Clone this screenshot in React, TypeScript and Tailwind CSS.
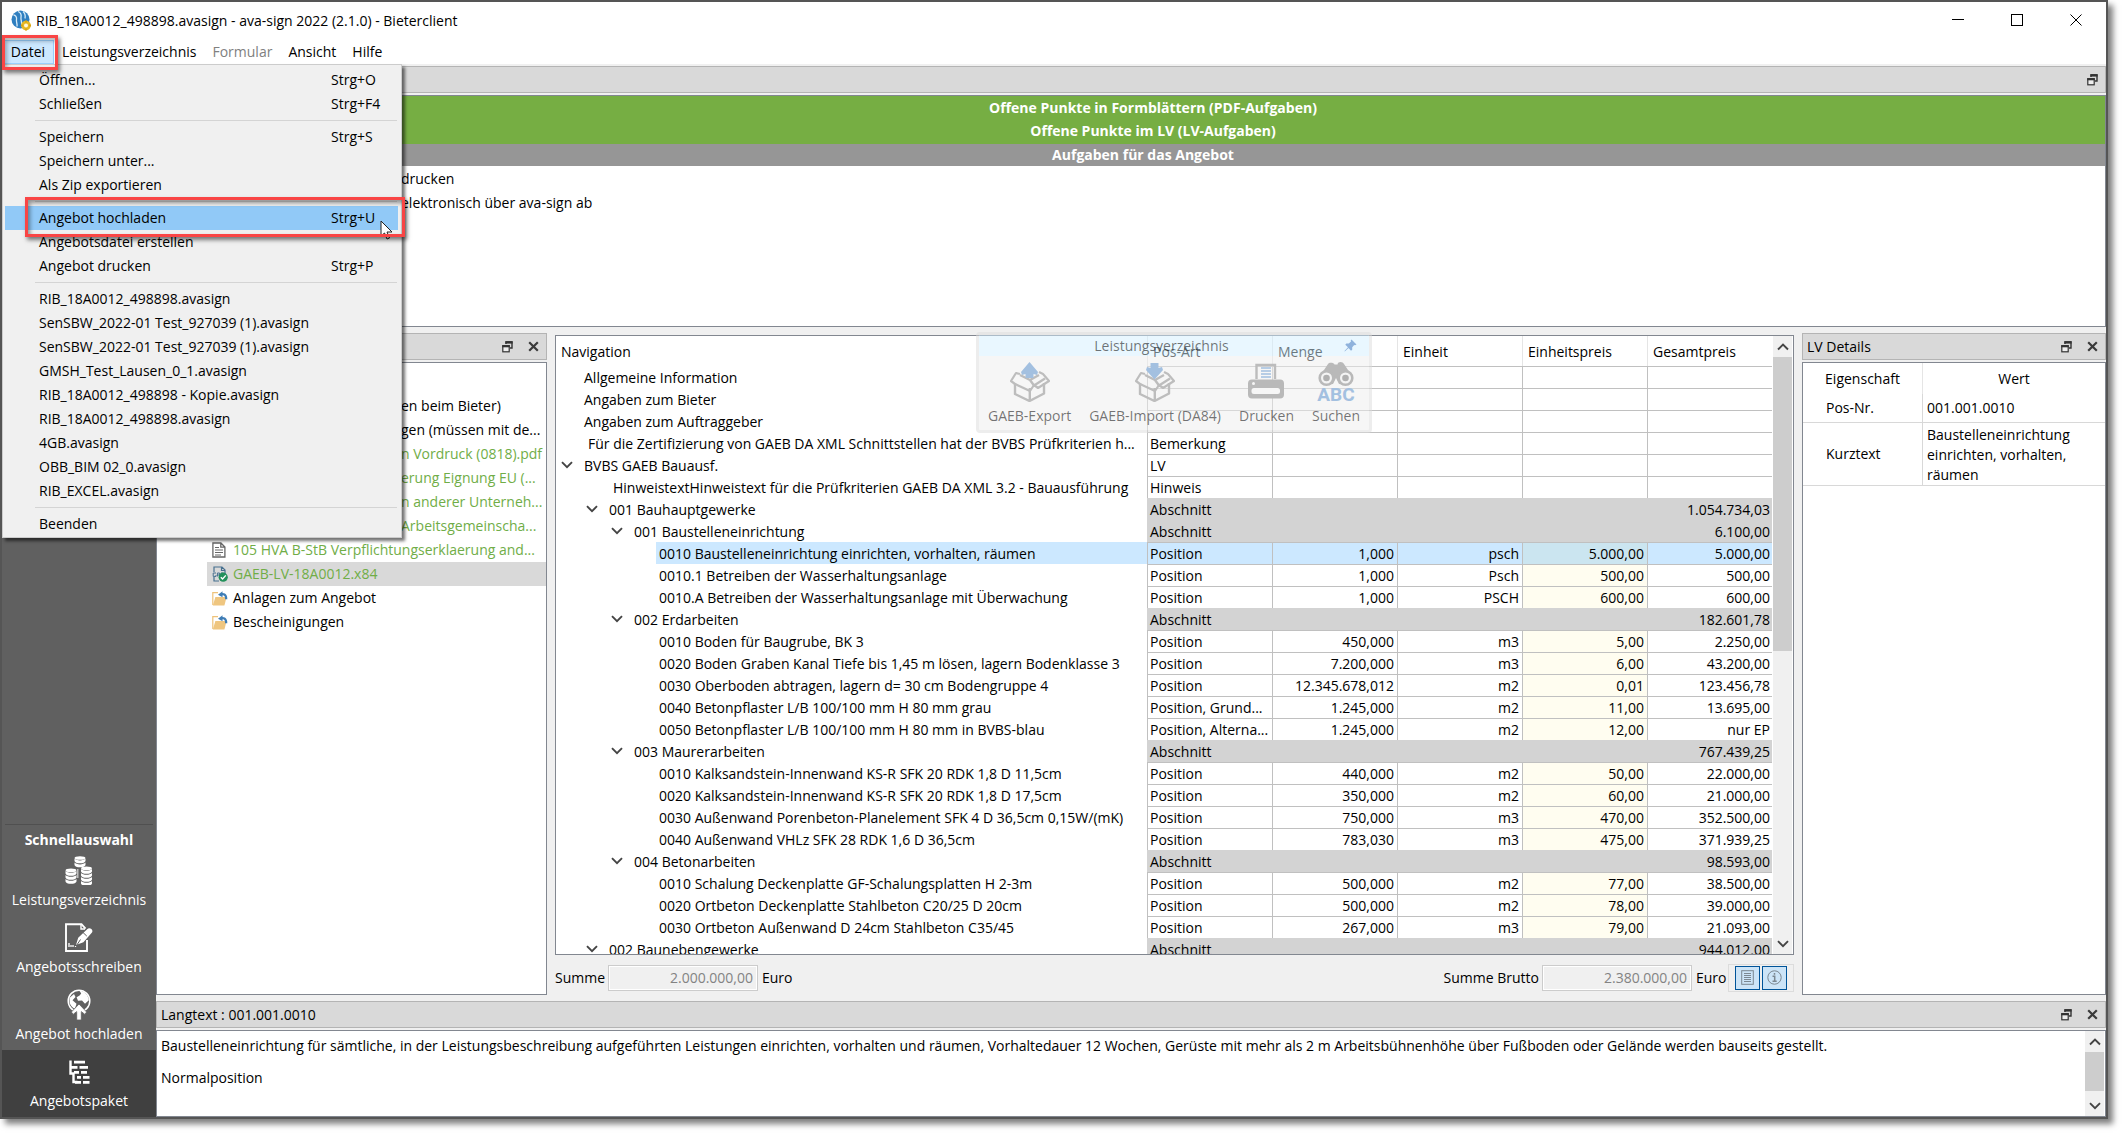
import { useState, type ReactNode } from "react";

interface MenuEntry {
  label: string;
  keys?: string;
}

interface GridRow {
  level: number;
  text: string;
  kind?: string;
  open?: boolean;
  menge?: string;
  einheit?: string;
  ep?: string;
  gp?: string;
}

const FILE_MENU: MenuEntry[][] = [
  [
    { label: "Öffnen...", keys: "Strg+O" },
    { label: "Schließen", keys: "Strg+F4" },
  ],
  [
    { label: "Speichern", keys: "Strg+S" },
    { label: "Speichern unter..." },
    { label: "Als Zip exportieren" },
  ],
  [
    { label: "Angebot hochladen", keys: "Strg+U" },
    { label: "Angebotsdatei erstellen" },
    { label: "Angebot drucken", keys: "Strg+P" },
  ],
  [
    { label: "RIB_18A0012_498898.avasign" },
    { label: "SenSBW_2022-01 Test_927039 (1).avasign" },
    { label: "SenSBW_2022-01 Test_927039 (1).avasign" },
    { label: "GMSH_Test_Lausen_0_1.avasign" },
    { label: "RIB_18A0012_498898 - Kopie.avasign" },
    { label: "RIB_18A0012_498898.avasign" },
    { label: "4GB.avasign" },
    { label: "OBB_BIM 02_0.avasign" },
    { label: "RIB_EXCEL.avasign" },
  ],
  [{ label: "Beenden" }],
];

const ROWS: GridRow[] = [
  { level: 0, text: "Allgemeine Information" },
  { level: 0, text: "Angaben zum Bieter" },
  { level: 0, text: "Angaben zum Auftraggeber" },
  { level: 0, text: "Für die Zertifizierung von GAEB DA XML Schnittstellen hat der BVBS Prüfkriterien h...", kind: "Bemerkung" },
  { level: 0, text: "BVBS GAEB Bauausf.", kind: "LV", open: true },
  { level: 1, text: "HinweistextHinweistext für die Prüfkriterien GAEB DA XML 3.2 - Bauausführung", kind: "Hinweis" },
  { level: 1, text: "001 Bauhauptgewerke", kind: "Abschnitt", open: true, gp: "1.054.734,03" },
  { level: 2, text: "001 Baustelleneinrichtung", kind: "Abschnitt", open: true, gp: "6.100,00" },
  { level: 3, text: "0010 Baustelleneinrichtung einrichten, vorhalten, räumen", kind: "Position", menge: "1,000", einheit: "psch", ep: "5.000,00", gp: "5.000,00" },
  { level: 3, text: "0010.1 Betreiben der Wasserhaltungsanlage", kind: "Position", menge: "1,000", einheit: "Psch", ep: "500,00", gp: "500,00" },
  { level: 3, text: "0010.A Betreiben der Wasserhaltungsanlage mit Überwachung", kind: "Position", menge: "1,000", einheit: "PSCH", ep: "600,00", gp: "600,00" },
  { level: 2, text: "002 Erdarbeiten", kind: "Abschnitt", open: true, gp: "182.601,78" },
  { level: 3, text: "0010 Boden für Baugrube, BK 3", kind: "Position", menge: "450,000", einheit: "m3", ep: "5,00", gp: "2.250,00" },
  { level: 3, text: "0020 Boden Graben Kanal Tiefe bis 1,45 m lösen, lagern Bodenklasse 3", kind: "Position", menge: "7.200,000", einheit: "m3", ep: "6,00", gp: "43.200,00" },
  { level: 3, text: "0030 Oberboden abtragen, lagern d= 30 cm Bodengruppe 4", kind: "Position", menge: "12.345.678,012", einheit: "m2", ep: "0,01", gp: "123.456,78" },
  { level: 3, text: "0040 Betonpflaster L/B 100/100 mm H 80 mm grau", kind: "Position, Grund...", menge: "1.245,000", einheit: "m2", ep: "11,00", gp: "13.695,00" },
  { level: 3, text: "0050 Betonpflaster L/B 100/100 mm H 80 mm in BVBS-blau", kind: "Position, Alterna...", menge: "1.245,000", einheit: "m2", ep: "12,00", gp: "nur EP" },
  { level: 2, text: "003 Maurerarbeiten", kind: "Abschnitt", open: true, gp: "767.439,25" },
  { level: 3, text: "0010 Kalksandstein-Innenwand KS-R SFK 20 RDK 1,8 D 11,5cm", kind: "Position", menge: "440,000", einheit: "m2", ep: "50,00", gp: "22.000,00" },
  { level: 3, text: "0020 Kalksandstein-Innenwand KS-R SFK 20 RDK 1,8 D 17,5cm", kind: "Position", menge: "350,000", einheit: "m2", ep: "60,00", gp: "21.000,00" },
  { level: 3, text: "0030 Außenwand Porenbeton-Planelement SFK 4 D 36,5cm 0,15W/(mK)", kind: "Position", menge: "750,000", einheit: "m3", ep: "470,00", gp: "352.500,00" },
  { level: 3, text: "0040 Außenwand VHLz SFK 28 RDK 1,6 D 36,5cm", kind: "Position", menge: "783,030", einheit: "m3", ep: "475,00", gp: "371.939,25" },
  { level: 2, text: "004 Betonarbeiten", kind: "Abschnitt", open: true, gp: "98.593,00" },
  { level: 3, text: "0010 Schalung Deckenplatte GF-Schalungsplatten H 2-3m", kind: "Position", menge: "500,000", einheit: "m2", ep: "77,00", gp: "38.500,00" },
  { level: 3, text: "0020 Ortbeton Deckenplatte Stahlbeton C20/25 D 20cm", kind: "Position", menge: "500,000", einheit: "m2", ep: "78,00", gp: "39.000,00" },
  { level: 3, text: "0030 Ortbeton Außenwand D 24cm Stahlbeton C35/45", kind: "Position", menge: "267,000", einheit: "m3", ep: "79,00", gp: "21.093,00" },
  { level: 1, text: "002 Baunebengewerke", kind: "Abschnitt", open: true, gp: "944.012,00" },
];

const INDENT = ["pl-[3px]", "pl-[28px]", "pl-[53px]", "pl-[78px]"];

const AppIcon = () => (
  <svg width="20" height="21" viewBox="0 0 20 21" aria-hidden="true">
    <circle cx="9.5" cy="9.5" r="9" fill="#2f7fc0" />
    <path d="M2.500 5c2 0 3.500 2 3 4.500s1 4 .5 7M7 1.500c3 1 3.500 3.500 3 6s1.500 5 .5 9M12 1.500c2.500 2 2.500 4.500 2 7" stroke="#d8ecf8" strokeWidth="1.3" fill="none" />
    <circle cx="15" cy="15.5" r="3.4" fill="#fff8dc" stroke="#e8b923" strokeWidth="2.8" />
    <path d="M15 10.5v2M15 18.5v2M10 15.5h2M18 15.5h2" stroke="#d9a514" strokeWidth="2" />
  </svg>
);

const FloatIcon = () => (
  <svg width="11" height="12" viewBox="0 0 11 12" fill="none" aria-hidden="true">
    <path d="M4 3V1h6v6H8" stroke="#333" strokeWidth="1.4" />
    <path d="M3.4 1.4h7.2" stroke="#333" strokeWidth="2.4" />
    <rect x="0.8" y="4.8" width="6.4" height="6" fill="#eee" stroke="#333" strokeWidth="1.2" />
    <path d="M0.2 5.2h7.6" stroke="#333" strokeWidth="2.2" />
  </svg>
);

const CloseIcon = () => (
  <svg width="11" height="11" viewBox="0 0 11 11" aria-hidden="true">
    <path d="M1.2 1.2l8.6 8.6M9.8 1.2L1.2 9.8" stroke="#3a3a3a" strokeWidth="2.2" />
  </svg>
);

const Chevron = ({ up }: { up?: boolean }) => (
  <svg width="12" height="8" viewBox="0 0 12 8" fill="none" aria-hidden="true">
    <path d={up ? "M1 6.5l5-5 5 5" : "M1 1.2l5 5 5-5"} stroke="#444" strokeWidth="1.9" />
  </svg>
);

const DocIcon = () => (
  <svg width="14" height="16" viewBox="0 0 14 16" fill="none" stroke="#666" aria-hidden="true">
    <path d="M.9 1h8l4 4v10H.9zM8.8 1v4.2H13" strokeWidth="1.3" />
    <path d="M3 5.5h4M3 8h8M3 10.5h8M3 13h6" />
  </svg>
);

const GaebIcon = () => (
  <svg width="16" height="16" viewBox="0 0 16 16" fill="none" aria-hidden="true">
    <path d="M2 6V1h8l3 3v4M2 11v4h5M9.5 1v3.5H13" stroke="#47708f" strokeWidth="1.2" />
    <path d="M4 7H1.2v3.4H4V9M5.4 10.5V7h2.2v3.5M5.4 9h2M9 10.5V7h2.5" stroke="#47708f" />
    <circle cx="11.2" cy="11.2" r="4.6" fill="#23915b" />
    <path d="M8.8 11.2l1.8 1.8 3.2-3.6" stroke="#fff" strokeWidth="1.4" />
  </svg>
);

const FolderIcon = () => (
  <svg width="16" height="15" viewBox="0 0 16 15" fill="none" aria-hidden="true">
    <path d="M6 1.6H.8V14" stroke="#eec27a" strokeWidth="1.2" />
    <path d="M3.4 6h11.2l-2.2 8.6H.8z" fill="#efc680" />
    <path d="M8.2 4.2c3-2.4 6.2-.8 6 4" stroke="#3f7db5" strokeWidth="2.2" />
    <path d="M6 3.8L10.5.2v6z" fill="#3f7db5" />
  </svg>
);

// one stack of coins, each rim a filled arc below the top ellipse
const CoinStack = ({ x, y, n }: { x: number; y: number; n: number }) => (
  <g>
    {Array.from({ length: n }, (_, i) => (
      <path key={i} d={`M${x} ${y + 2 + i * 4}v2.2c0 3.4 11 3.4 11 0v-2.2c-2 2.4-9 2.4-11 0z`} />
    ))}
    <ellipse cx={x + 5.5} cy={y + 1.4} rx="5.4" ry="1.8" />
  </g>
);

const CoinsIcon = () => (
  <svg width="28" height="29" viewBox="0 0 28 29" fill="#fff" aria-hidden="true">
    <CoinStack x={9.5} y={0.6} n={2} />
    <CoinStack x={0.5} y={13} n={3} />
    <CoinStack x={16} y={11} n={4} />
    <path d="M12 13h1.500v9H12z" opacity=".6" />
  </svg>
);

const LetterIcon = () => (
  <svg width="28" height="29" viewBox="0 0 28 29" fill="none" aria-hidden="true">
    <path d="M22 17v11H1V1.2h15.5l4 4.4" stroke="#fff" strokeWidth="1.9" />
    <path d="M16 1v5h4" stroke="#fff" strokeWidth="1.4" />
    <path d="M11 22l2.2-7.2L22.4 6c2-2 6.4.4 4.6 3.6l-8.6 9.6z" fill="#fff" />
    <path d="M18 9.5l3.8 3.6M11.5 22.5l4-6" stroke="#606060" strokeWidth="1" />
    <path d="M4 24v-4M6 24v-2M8 24v-2M10.5 24v-1" stroke="#fff" strokeWidth="1.3" />
  </svg>
);

const UploadIcon = () => (
  <svg width="24" height="31" viewBox="0 0 24 31" aria-hidden="true">
    <circle cx="12" cy="12" r="10.8" fill="none" stroke="#fff" strokeWidth="1.5" />
    <path d="M12.5 1.8c5 .4 9 4.4 9.3 9.4l-3.8 3.6-3-3.2-4 .2-1.4-3.6 3-1.8 1.6-1.8zM3 8.6l4-3.6 1.5 3-3 3.2 4 3.6-1.6 5C4 18 1.4 14 3 8.6zM19.6 16l-1.2 3.4" fill="#fff" />
    <path d="M12 15l7.6 8-1.7 2.4-3.6-2.8V31H9.7v-8.400l-3.600 2.800L4.400 23z" fill="#fff" stroke="#606060" strokeWidth=".8" />
  </svg>
);

const TreeIcon = () => (
  <svg width="21" height="24" viewBox="0 0 21 24" fill="none" stroke="#fff" strokeWidth="2.8" aria-hidden="true">
    <path d="M1.500 .500v13h4M4.500 13v9h4" strokeWidth="2.400" />
    <path d="M5 2.200h11M1 7.400h7.500M10.500 7.400H19M5 12.400h5M12 12.400h6M8 17.400h4M14 17.400h6.500M6 22.300h6M14 22.300h6.500" />
  </svg>
);

const BoxIcon = ({ out }: { out?: boolean }) => (
  <svg width="40" height="40" viewBox="0 0 40 40" fill="none" aria-hidden="true">
    <path d="M10 12l-4-1-5 8 4 3 15 7 4-6 4 3 11-7-6-7-4-2" stroke="#bdbdbd" strokeWidth="2.200" strokeLinejoin="round" />
    <path d="M5 21v11l14.500 7L34 31.500V21M19.800 26v12.500M10 13l10 5 9-5M20 18l4 5.500 11-7" stroke="#bdbdbd" strokeWidth="2.400" strokeLinejoin="round" />
    <path d={out ? "M19.500 0l8.500 10-1 3-3.500-1v4h-8v-4l-3.500 1-1-3z" : "M15.500 1h8v5l3.500-1 1 3-8.500 9.500L11 8l1-3 3.500 1z"} fill="#a3c0e0" />
  </svg>
);

const PrinterIcon = () => (
  <svg width="38" height="36" viewBox="0 0 38 36" aria-hidden="true">
    <path d="M9.500 16V2h18.500v14" fill="none" stroke="#bcbcbc" strokeWidth="2.400" />
    <path d="M14 5h10M14 8h10M14 11h10M14 14h10" stroke="#a3c0e0" strokeWidth="1.600" />
    <path d="M5 16.500h28a4 4 0 014 4V31.500a4 4 0 01-4 4H5a4 4 0 01-4-4v-11a4 4 0 014-4z" fill="#b9b9b9" />
    <rect x="4.500" y="25" width="28.500" height="6" rx="2.500" fill="#f6f6f6" />
    <circle cx="6.500" cy="20.500" r="1.500" fill="#f6f6f6" />
  </svg>
);

const SearchAbcIcon = () => (
  <svg width="38" height="40" viewBox="0 0 38 40" aria-hidden="true">
    <path d="M3 14L11 2c1-2 6-1.500 6.500.500h3C21-1 26-.500 27 2l8 12-4 9-9-1-3-6-3 6-9 1z" fill="#b9b9b9" />
    <g fill="#f4f4f4" stroke="#b9b9b9" strokeWidth="2.600">
      <circle cx="9.500" cy="16" r="6.800" />
      <circle cx="28.500" cy="16" r="6.800" />
    </g>
    <circle cx="9.500" cy="16" r="3.300" fill="#b0b0b0" />
    <circle cx="28.500" cy="16" r="3.300" fill="#b0b0b0" />
    <text x="19" y="39" textAnchor="middle" fontFamily="Roboto, sans-serif" fontSize="19" fontWeight="700" fill="#a3c0e0">ABC</text>
  </svg>
);

const PinIcon = () => (
  <svg width="13" height="13" viewBox="0 0 13 13" aria-hidden="true">
    <path d="M7.500.500l5 5-1.500.800-.800-.300-2 2.200v2.500l-1.200 1L4.500 9 .800 12.500.500 12 4 8.300 1.300 5.700l1-1.200h2.500L7 2.500 6.700 1.500z" fill="#8fb2dc" />
  </svg>
);

const ListIcon = () => (
  <svg width="13" height="15" viewBox="0 0 13 15" fill="none" stroke="#7b8791" aria-hidden="true">
    <rect x=".7" y=".7" width="11.600" height="13.600" />
    <path d="M3 3.500h7M3 5.500h7M3 7.500h7M3 9.500h7M3 11.500h7" />
  </svg>
);

const InfoIcon = () => (
  <svg width="15" height="15" viewBox="0 0 15 15" fill="none" stroke="#7b8791" aria-hidden="true">
    <circle cx="7.500" cy="7.500" r="6.700" />
    <path d="M5.500 6.200h2.200V11M5.500 11.300h4.200M7.500 3v1.800" strokeWidth="1.500" />
  </svg>
);

function DockTitle({ title, closable = true }: { title?: string; closable?: boolean }) {
  return (
    <div className="flex h-[27px] shrink-0 items-center border border-[#b4b4b4] bg-[#d9d9d9] pl-1 pr-[7px]">
      <span className="flex-1 pt-[1px]">{title}</span>
      <button aria-label="Lösen" className="flex"><FloatIcon /></button>
      {closable && <button aria-label="Schließen" className="ml-[15px] flex"><CloseIcon /></button>}
    </div>
  );
}

function ScrollBar({ thumb }: { thumb: string }) {
  return (
    <div className="flex w-[21px] shrink-0 flex-col border-x border-white bg-[#f0f0f0]">
      <button aria-label="Nach oben" className="flex h-[21px] shrink-0 items-center justify-center"><Chevron up /></button>
      <div className="flex-1"><div className={`bg-[#cdcdcd] ${thumb}`} /></div>
      <button aria-label="Nach unten" className="flex h-[21px] shrink-0 items-center justify-center"><Chevron /></button>
    </div>
  );
}

function SideButton({ label, icon, active }: { label: string; icon: ReactNode; active?: boolean }) {
  return (
    <button className={`flex h-[67px] flex-col items-center ${active ? "bg-[#404040]" : ""}`}>
      <span className="flex h-[41px] items-center pt-[2px]">{icon}</span>
      <span className="leading-5">{label}</span>
    </button>
  );
}

function FileMenu() {
  return (
    <div role="menu" className="absolute left-0 top-0 z-20 w-[400px] border border-[#ccc] bg-[#f0f0f0] pb-[1px] pt-[3px] shadow-[3px_3px_3px_rgba(0,0,0,0.55)]">
      {FILE_MENU.map((group, g) => (
        <div key={g}>
          {g > 0 && <div className="ml-8 mr-1 py-1"><div className="h-px bg-[#d4d4d4]" /></div>}
          {group.map((m, i) => (
            <button
              key={i}
              role="menuitem"
              className={`mx-[2px] flex h-6 w-[393px] items-center pl-[34px] text-left ${m.keys === "Strg+U" ? "bg-[#91c9f7]" : ""}`}
            >
              <span className="w-[292px] whitespace-nowrap">{m.label}</span>
              <span>{m.keys}</span>
            </button>
          ))}
        </div>
      ))}
      {/* mouse pointer and the frame round the marked entry */}
      <svg className="absolute left-[377px] top-[155px]" width="14" height="21" viewBox="0 0 14 21" aria-hidden="true">
        <path d="M1 1v15l3.500-3 2.500 6 2.500-1-2.500-6H12z" fill="#fff" stroke="#222" />
      </svg>
      <div className="pointer-events-none absolute left-[22px] top-[132px] h-[40px] w-[380px] border-3 border-[#f94545] shadow-[2px_3px_4px_rgba(0,0,0,0.5),inset_2px_3px_4px_rgba(0,0,0,0.4)]" />
    </div>
  );
}

function ProjectTree() {
  const files = [
    "n Vordruck (0818).pdf",
    "erung Eignung EU (...",
    "n anderer Unterneh...",
    "Arbeitsgemeinscha...",
  ];
  return (
    <section className="flex w-[391px] shrink-0 flex-col">
      <DockTitle />
      <ul className="mt-[2px] flex-1 overflow-hidden whitespace-nowrap border border-[#828790] bg-white pt-[31px] leading-6">
        <li className="pl-[244px]">en beim Bieter)</li>
        <li className="pl-[244px]">gen (müssen mit de...</li>
        {files.map((f) => (
          <li key={f} className="pl-[244px] text-[#70ad47]">{f}</li>
        ))}
        <li className="flex items-center gap-[7px] pl-[55px] text-[#70ad47]"><DocIcon />105 HVA B-StB Verpflichtungserklaerung and...</li>
        <li className="ml-[50px] flex items-center gap-[5px] bg-[#d9d9d9] pl-[5px] text-[#70ad47]"><GaebIcon />GAEB-LV-18A0012.x84</li>
        <li className="flex items-center gap-[5px] pl-[55px]"><FolderIcon />Anlagen zum Angebot</li>
        <li className="flex items-center gap-[5px] pl-[55px]"><FolderIcon />Bescheinigungen</li>
      </ul>
    </section>
  );
}

function Row({ row, selected, onSelect }: { row: GridRow; selected: boolean; onSelect: () => void }) {
  const section = row.kind === "Abschnitt";
  const bg = selected ? "bg-[#cce8ff]" : section ? "bg-[#d3d3d3]" : "bg-white";
  const epBg = selected ? "bg-[#cbe5f0]" : row.ep ? "bg-[#fffdf0]" : bg;
  const cell = `h-[22px] border-l border-t p-0 ${section ? "border-[#d3d3d3]" : "border-[#c0c0c0]"}`;
  return (
    <tr onClick={onSelect}>
      <td className={`h-[22px] p-0 ${INDENT[row.level]}`}>
        <div className="flex h-[22px] items-center">
          <span className="flex w-[22px] shrink-0 pl-[2px]">
            {row.open && <button aria-label="Zuklappen" className="flex"><Chevron /></button>}
          </span>
          <span className={`h-[22px] flex-1 overflow-hidden whitespace-nowrap pl-[3px] leading-6 ${selected ? "bg-[#cce8ff]" : ""}`}>
            {row.kind === "Bemerkung" || row.kind === "Hinweis" ? <span className="pl-1">{row.text}</span> : row.text}
          </span>
        </div>
      </td>
      <td className={`${cell} ${bg} overflow-hidden whitespace-nowrap`}><div className="pl-[2px] leading-[21px]">{row.kind}</div></td>
      <td className={`${cell} ${bg} text-right`}><div className="pr-[3px] leading-[20px]">{row.menge}</div></td>
      <td className={`${cell} ${bg} text-right`}><div className="pr-[3px] leading-[20px]">{row.einheit}</div></td>
      <td className={`${cell} ${epBg} text-right`}><div className="pr-[3px] leading-[20px]">{row.ep}</div></td>
      <td className={`${cell} ${bg} text-right`}><div className="pr-[2px] leading-[20px]">{row.gp}</div></td>
    </tr>
  );
}

function FloatingToolbar() {
  return (
    <div className="absolute left-[421px] top-[-3px] z-10 w-[396px] rounded border-3 border-[#dcdcdc]/50 text-black/55">
      <div className="flex h-[21px] items-center bg-[#d4f0ff]/50">
        <span className="flex-1 text-center">Leistungsverzeichnis</span>
        <button aria-label="Anheften" className="mr-3 flex"><PinIcon /></button>
      </div>
      <div className="flex h-[74px] justify-between whitespace-nowrap bg-[#ededed]/50 px-[9px] pb-1 pt-[6px]">
        <button className="flex flex-col items-center"><span className="flex h-11"><BoxIcon out /></span>GAEB-Export</button>
        <button className="flex flex-col items-center"><span className="flex h-11"><BoxIcon /></span>GAEB-Import (DA84)</button>
        <button className="flex flex-col items-center"><span className="flex h-11 pt-[1px]"><PrinterIcon /></span>Drucken</button>
        <button className="flex flex-col items-center"><span className="flex h-11"><SearchAbcIcon /></span>Suchen</button>
      </div>
    </div>
  );
}

function PositionGrid() {
  const [selected, setSelected] = useState(8);
  const head = "h-[30px] border-l border-[#e5e5e5] p-0 pl-[5px] pt-[2px] text-left font-normal";
  return (
    <section className="flex min-w-0 flex-1 flex-col pt-[2px]">
      <div className="relative min-h-0 flex-1">
        <div className="absolute inset-0 flex overflow-hidden border border-[#828790] bg-white">
          <div className="min-w-0 flex-1 overflow-hidden">
            <table className="w-full table-fixed border-separate border-spacing-0">
              <colgroup>
                <col />
                <col className="w-[125px]" />
                <col className="w-[125px]" />
                <col className="w-[125px]" />
                <col className="w-[125px]" />
                <col className="w-[125px]" />
              </colgroup>
              <thead>
                <tr>
                  <th className="h-[30px] p-0 pl-[5px] pt-[2px] text-left font-normal">Navigation</th>
                  <th className={head}>Pos-Art</th>
                  <th className={head}>Menge</th>
                  <th className={head}>Einheit</th>
                  <th className={head}>Einheitspreis</th>
                  <th className={head}>Gesamtpreis</th>
                </tr>
              </thead>
              <tbody>
                {ROWS.map((r, i) => (
                  <Row key={i} row={r} selected={i === selected} onSelect={() => setSelected(i)} />
                ))}
              </tbody>
            </table>
          </div>
          <ScrollBar thumb="h-[294px]" />
        </div>
        <FloatingToolbar />
      </div>
      <div className="flex h-[40px] items-center pt-[5px]">
        <label htmlFor="summe" className="w-[53px]">Summe</label>
        <input id="summe" disabled value="2.000.000,00" className="h-[26px] w-[150px] border border-[#ccc] bg-[#f0f0f0] pr-1 text-right text-[#838383] outline-1 -outline-offset-2 outline-white" />
        <span className="flex-1 pl-1">Euro</span>
        <label htmlFor="brutto" className="pr-[3px]">Summe Brutto</label>
        <input id="brutto" disabled value="2.380.000,00" className="h-[26px] w-[150px] border border-[#ccc] bg-[#f0f0f0] pr-1 text-right text-[#838383] outline-1 -outline-offset-2 outline-white" />
        <span className="w-9 pl-1">Euro</span>
        <div className="flex h-[28px] items-center gap-[2px] border border-[#dcdcdc] px-[6px]">
          <button aria-label="Langtext" className="flex h-6 w-[25px] items-center justify-center border border-[#005499] bg-[#cce4f7]"><ListIcon /></button>
          <button aria-label="Details" className="flex h-6 w-[25px] items-center justify-center border border-[#005499] bg-[#cce4f7]"><InfoIcon /></button>
        </div>
      </div>
    </section>
  );
}

function LvDetails() {
  return (
    <section className="flex w-[304px] shrink-0 flex-col">
      <DockTitle title="LV Details" />
      <div className="mt-[2px] flex-1 border border-[#828790] bg-white">
        <table className="w-full table-fixed border-separate border-spacing-0">
          <colgroup>
            <col className="w-[119px]" />
            <col />
          </colgroup>
          <thead>
            <tr>
              <th className="h-[31px] p-0 font-normal">Eigenschaft</th>
              <th className="h-[31px] border-l border-[#e5e5e5] p-0 font-normal">Wert</th>
            </tr>
          </thead>
          <tbody>
            <tr>
              <td className="h-[29px] border-b border-[#d8d8d8] p-0 pl-[23px]">Pos-Nr.</td>
              <td className="h-[29px] border-b border-l border-[#d8d8d8] p-0 pl-1">001.001.0010</td>
            </tr>
            <tr>
              <td className="border-b border-[#d8d8d8] p-0 pl-[23px]">Kurztext</td>
              <td className="border-b border-l border-[#d8d8d8] pb-0 pl-1 pr-6 pt-[2px] leading-5">Baustelleneinrichtung einrichten, vorhalten, räumen</td>
            </tr>
          </tbody>
        </table>
      </div>
    </section>
  );
}

export default function App() {
  return (
    <div className="h-screen bg-white pb-[15px] pr-[15px] font-['Open_Sans',sans-serif] text-sm text-black">
      <div className="flex h-full flex-col border-2 border-[#555] bg-[#f0f0f0] shadow-[5px_5px_6px_rgba(0,0,0,0.5)]">
        <header className="flex h-9 shrink-0 items-center bg-white pl-[9px]">
          <AppIcon />
          <h1 className="flex-1 pl-[5px] pt-[1px]">RIB_18A0012_498898.avasign - ava-sign 2022 (2.1.0) - Bieterclient</h1>
          <div className="flex gap-[47px] pr-6">
            <button aria-label="Minimieren">
              <svg width="12" height="12"><path d="M0 5.500h12" stroke="#000" /></svg>
            </button>
            <button aria-label="Maximieren">
              <svg width="12" height="12"><rect x=".5" y=".5" width="11" height="11" fill="none" stroke="#000" /></svg>
            </button>
            <button aria-label="Beenden">
              <svg width="12" height="12"><path d="M.5.500l11 11M11.500.500l-11 11" stroke="#000" /></svg>
            </button>
          </div>
        </header>

        <nav className="flex h-[26px] shrink-0 items-center bg-white pt-[2px]">
          <div className="relative z-30">
            <button className="flex h-6 w-[52px] items-center justify-center border border-[#99d1ff] bg-[#cce8ff]">Datei</button>
            <div className="pointer-events-none absolute left-0 -top-[5px] h-[35px] w-[56px] border-3 border-[#f94545] shadow-[2px_3px_4px_rgba(0,0,0,0.5),inset_2px_3px_4px_rgba(0,0,0,0.3)]" />
          </div>
          <button className="px-2">Leistungsverzeichnis</button>
          <button className="px-2 text-[#808080]">Formular</button>
          <button className="px-2">Ansicht</button>
          <button className="px-2">Hilfe</button>
        </nav>

        <div className="relative flex min-h-0 flex-1">
          <FileMenu />
          <aside className="flex w-[154px] shrink-0 flex-col justify-end bg-[#606060] text-white">
            <div className="mx-[3px] h-px bg-[#505050]" />
            <h2 className="pt-[6px] text-center font-bold leading-[18px]">Schnellauswahl</h2>
            <SideButton label="Leistungsverzeichnis" icon={<CoinsIcon />} />
            <SideButton label="Angebotsschreiben" icon={<LetterIcon />} />
            <SideButton label="Angebot hochladen" icon={<UploadIcon />} />
            <SideButton label="Angebotspaket" icon={<TreeIcon />} active />
          </aside>

          <main className="flex min-w-0 flex-1 flex-col gap-[6px] pt-[2px]">
            <section>
              <DockTitle closable={false} />
              <div className="mt-[2px] h-[232px] border border-[#828790] bg-white leading-6">
                <div className="bg-[#76ae43] pb-[1px] pl-11 text-center font-bold text-white">
                  <h3 className="leading-[23px]">Offene Punkte in Formblättern (PDF-Aufgaben)</h3>
                  <h3>Offene Punkte im LV (LV-Aufgaben)</h3>
                </div>
                <h3 className="bg-[#969696] pl-6 text-center font-bold leading-[22px] text-white">Aufgaben für das Angebot</h3>
                <div className="pl-[244px] pt-[1px]">
                  <p>drucken</p>
                  <p>elektronisch über ava-sign ab</p>
                </div>
              </div>
            </section>

            <div className="flex min-h-0 flex-1 gap-2">
              <ProjectTree />
              <PositionGrid />
              <LvDetails />
            </div>

            <section>
              <DockTitle title="Langtext : 001.001.0010" />
              <div className="mt-[2px] flex h-[87px] border border-[#828790] bg-white">
                <div className="flex-1 space-y-3 pl-1 pt-[5px]">
                  <p>Baustelleneinrichtung für sämtliche, in der Leistungsbeschreibung aufgeführten Leistungen einrichten, vorhalten und räumen, Vorhaltedauer 12 Wochen, Gerüste mit mehr als 2 m Arbeitsbühnenhöhe über Fußboden oder Gelände werden bauseits gestellt.</p>
                  <p>Normalposition</p>
                </div>
                <ScrollBar thumb="h-[39px]" />
              </div>
            </section>
          </main>
        </div>
      </div>
    </div>
  );
}
